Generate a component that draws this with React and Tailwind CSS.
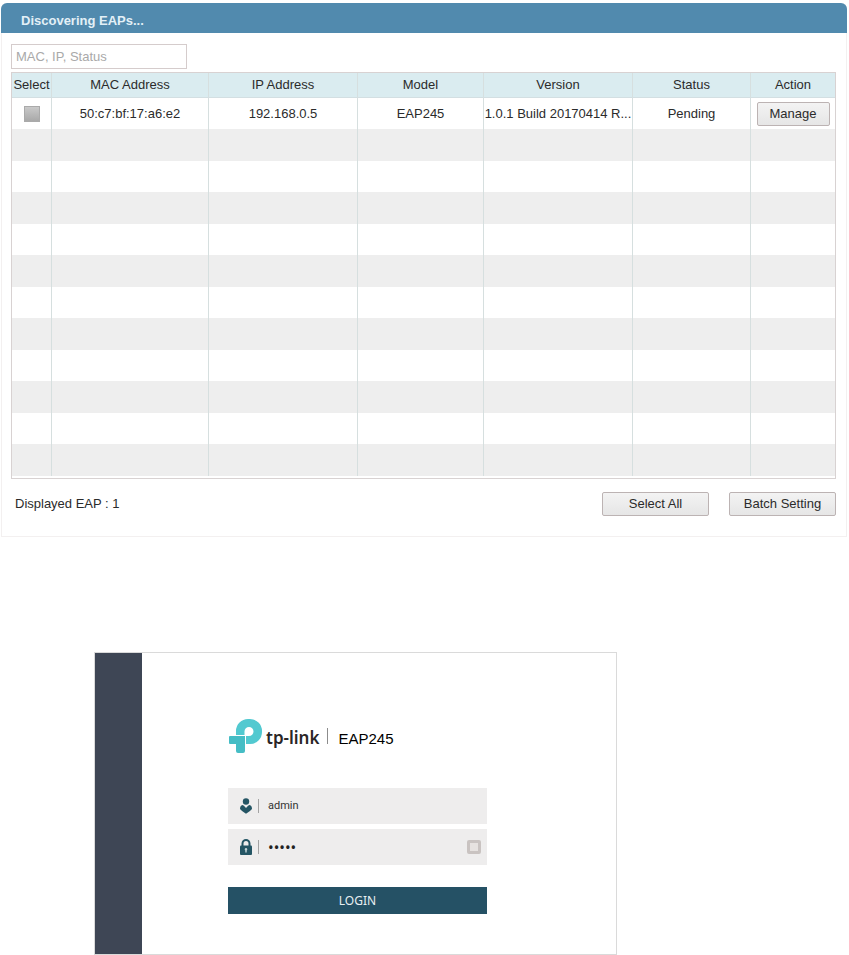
import { useState } from 'react';

const COLUMNS = [
  { label: 'Select', width: 'w-[39px]' },
  { label: 'MAC Address', width: 'w-[157px]' },
  { label: 'IP Address', width: 'w-[149px]' },
  { label: 'Model', width: 'w-[126px]' },
  { label: 'Version', width: 'w-[149px]' },
  { label: 'Status', width: 'w-[118px]' },
  { label: 'Action', width: 'w-[85px]' },
];

const DEVICES = [
  {
    mac: '50:c7:bf:17:a6:e2',
    ip: '192.168.0.5',
    model: 'EAP245',
    version: '1.0.1 Build 20170414 R...',
    status: 'Pending',
  },
];

const EMPTY_ROWS = 11;

const cell = 'border-l border-[#d6dfdf] first:border-l-0 p-0';

function PanelButton({ className, children, ...props }) {
  return (
    <button
      type="button"
      className={`h-6 rounded-[2px] border border-[#bcb3b3] bg-linear-to-b from-[#f3f3f3] to-[#e6e6e6] text-[13px] leading-4 text-[#2b2b2b] ${className}`}
      {...props}
    >
      {children}
    </button>
  );
}

function DiscoveryPanel() {
  const [query, setQuery] = useState('');
  const [selected, setSelected] = useState([]);

  const toggle = (mac) =>
    setSelected((list) => (list.includes(mac) ? list.filter((m) => m !== mac) : [...list, mac]));

  const devices = DEVICES.filter((d) =>
    [d.mac, d.ip, d.status].join(' ').toLowerCase().includes(query.toLowerCase())
  );

  return (
    <section className="mr-[2px] ml-px rounded-t-md border border-t-0 border-[#f3f0f0] text-[13px] leading-4 text-[#2b2b2b]">
      <h2 className="-mx-px flex h-[30px] items-center rounded-t-md bg-[#518aae] px-5 pt-[6px] font-bold text-[#e3f0f7]">
        Discovering EAPs...
      </h2>

      <div className="pt-[11px] pr-[10px] pb-5 pl-[9px]">
        <input
          type="text"
          aria-label="Filter by MAC, IP or status"
          placeholder="MAC, IP, Status"
          value={query}
          onChange={(e) => setQuery(e.target.value)}
          className="block h-[25px] w-44 border border-[#d5cccc] bg-white px-1 text-[13px] placeholder:text-[#a9a9a9]"
        />

        <div className="mt-[3px] border border-[#d8d2d2] pb-[2px]">
          <table className="w-full table-fixed border-separate border-spacing-0">
            <thead>
              <tr className="h-[25px] bg-[#daecf0]">
                {COLUMNS.map(({ label, width }) => (
                  <th
                    key={label}
                    scope="col"
                    className={`${width} ${cell} border-b border-b-[#d3dfe2] font-normal`}
                  >
                    {label}
                  </th>
                ))}
              </tr>
            </thead>
            <tbody className="text-center whitespace-nowrap">
              {devices.map((d) => (
                <tr key={d.mac} className="h-[31px]">
                  <td className={cell}>
                    <input
                      type="checkbox"
                      aria-label={`Select ${d.mac}`}
                      checked={selected.includes(d.mac)}
                      onChange={() => toggle(d.mac)}
                      className="mx-auto block size-4 appearance-none border border-[#aaaaaa] bg-linear-to-b from-[#c9c9c9] to-[#a9a9a9] checked:to-[#518aae]"
                    />
                  </td>
                  <td className={cell}>{d.mac}</td>
                  <td className={cell}>{d.ip}</td>
                  <td className={cell}>{d.model}</td>
                  <td className={cell}>{d.version}</td>
                  <td className={cell}>{d.status}</td>
                  <td className={cell}>
                    <PanelButton className="w-[73px]">Manage</PanelButton>
                  </td>
                </tr>
              ))}
              {Array.from({ length: EMPTY_ROWS }, (_, i) => (
                <tr key={i} className="odd:h-[31px] even:h-8 even:bg-[#eeeeee]">
                  {COLUMNS.map(({ label }) => (
                    <td key={label} className={cell} />
                  ))}
                </tr>
              ))}
            </tbody>
          </table>
        </div>

        <div className="mt-[13px] flex items-center gap-5">
          <p className="flex-1 pl-1">Displayed EAP : {devices.length}</p>
          <PanelButton className="w-[107px]" onClick={() => setSelected(devices.map((d) => d.mac))}>
            Select All
          </PanelButton>
          <PanelButton className="w-[107px]">Batch Setting</PanelButton>
        </div>
      </div>
    </section>
  );
}

function TpLinkMark() {
  return (
    <svg viewBox="0 0 34 36" className="h-9 w-[34px]" aria-hidden="true">
      {/* bowl of the P, then the arm and stem under it */}
      <path
        d="M8 17 V13 A12 12 0 0 1 20 1 H22 A12 12 0 0 1 34 13 V14 A12 12 0 0 1 22 26 H18 V18 H21 A4.5 4.5 0 0 0 25.5 13.5 A4.5 4.5 0 0 0 16.5 13.5 V17 Z"
        fill="#52c9d0"
      />
      <path d="M2 18 H17 V33 Q17 35 15 35 H10 Q8 35 8 33 V26 H2 Q1 26 1 25 V19 Q1 18 2 18 Z" fill="#45bdc5" />
    </svg>
  );
}

function UserIcon() {
  return (
    <svg viewBox="0 0 12 16" className="h-4 w-3" fill="#245564" aria-hidden="true">
      <circle cx="6" cy="3.5" r="3.2" />
      <path d="M2.5 7 Q3.5 7 6 10 Q8.5 7 9.5 7 Q12 7.5 12 11 Q10.5 13 6 15.8 Q1.5 13 0 11 Q0 7.5 2.5 7 Z" />
    </svg>
  );
}

function LockIcon() {
  return (
    <svg viewBox="0 0 12 16" className="h-4 w-3" aria-hidden="true">
      <path d="M2.5 8 V4.5 A3.5 3.5 0 0 1 9.5 4.5 V8" fill="none" stroke="#245564" strokeWidth="2" />
      <rect y="6.5" width="12" height="9.5" rx="1" fill="#245564" />
      <path d="M6 9 a1.3 1.3 0 0 1 0.7 2.4 V13.5 H5.3 V11.4 A1.3 1.3 0 0 1 6 9 Z" fill="#c3d4d8" />
    </svg>
  );
}

function LoginField({ icon, children }) {
  return (
    <div className="flex h-9 items-center bg-[#eeeded] pr-[6px] pl-3">
      {icon}
      <span className="mr-[9px] ml-[6px] h-[14px] w-px bg-[#a3a3a3]" />
      {children}
    </div>
  );
}

function LoginCard() {
  const [username, setUsername] = useState('admin');
  const [password, setPassword] = useState('admin');

  return (
    <section className="mt-[115px] ml-[94px] flex max-w-[523px] border border-[#dadada]">
      <div className="w-[47px] shrink-0 bg-[#3e4655]" />

      <form onSubmit={(e) => e.preventDefault()} className="min-w-0 flex-1 pt-[65px] pr-[129px] pb-10 pl-[86px]">
        <div className="flex h-9 items-center">
          <TpLinkMark />
          <span className="pt-1 pl-1 font-['Noto_Sans',sans-serif] text-[17px] leading-6 font-semibold text-[#2a2626]">
            tp-link
          </span>
          <span className="ml-2 h-4 w-px bg-[#8c8c8c]" />
          <span className="pt-[6px] pl-[10px] text-[15px] leading-5 text-black">EAP245</span>
        </div>

        <div className="mt-[34px] grid grid-cols-1 gap-[5px]">
          <LoginField icon={<UserIcon />}>
            <input
              type="text"
              aria-label="Username"
              value={username}
              onChange={(e) => setUsername(e.target.value)}
              className="min-w-0 flex-1 bg-transparent font-[Roboto,sans-serif] text-[11px] text-[#333333] outline-none"
            />
          </LoginField>
          <LoginField icon={<LockIcon />}>
            <input
              type="password"
              aria-label="Password"
              value={password}
              onChange={(e) => setPassword(e.target.value)}
              className="h-6 min-w-0 flex-1 bg-transparent font-['Noto_Sans',sans-serif] text-[15px] text-[#222222] outline-none"
            />
            <input
              type="checkbox"
              aria-label="Show password"
              className="size-[14px] appearance-none rounded-[2px] border-[3px] border-[#c9c3c1] bg-[#e6e2e0]"
            />
          </LoginField>
        </div>

        <button
          type="submit"
          className="mt-[22px] block h-[27px] w-full bg-[#255165] font-['Noto_Sans',sans-serif] text-[12px] leading-4 text-[#e9eff2]"
        >
          LOGIN
        </button>
      </form>
    </section>
  );
}

export default function App() {
  return (
    <main className="bg-white pt-[3px] font-['Liberation_Sans',Arial,sans-serif]">
      <DiscoveryPanel />
      <LoginCard />
    </main>
  );
}
